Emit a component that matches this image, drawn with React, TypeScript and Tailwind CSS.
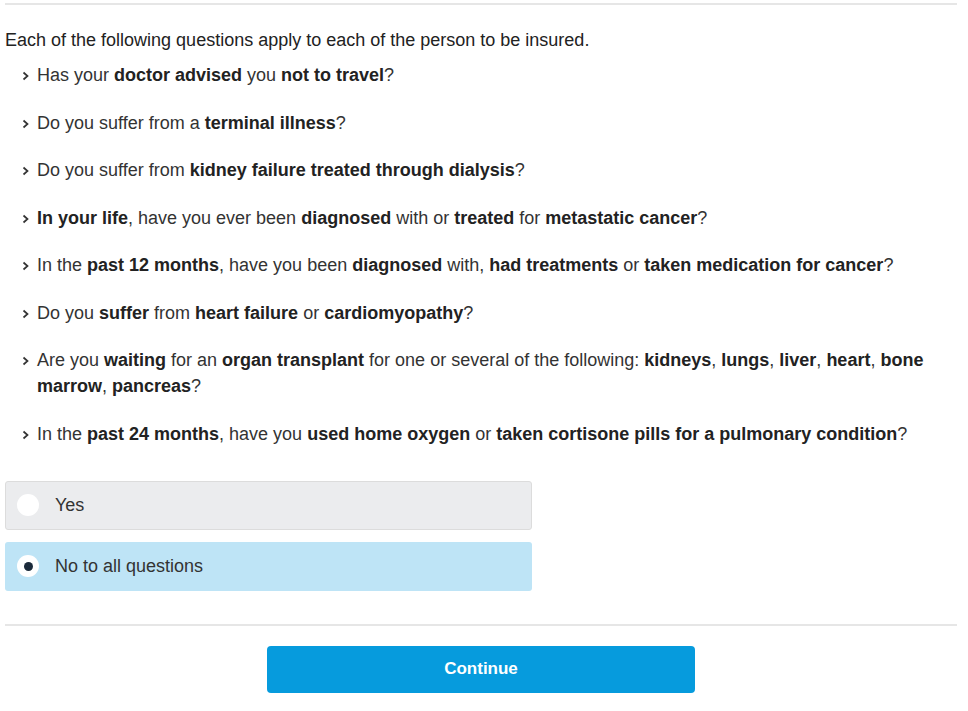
const Chevron = () => (
  <svg width="8" height="10" viewBox="0 0 8 10" className="shrink-0 mt-[9px] mr-[7px]">
    <path d="M1.5 1.5 L5.5 5 L1.5 8.5" fill="none" stroke="#333" strokeWidth="1.7" />
  </svg>
);

const B = ({ children }: { children: React.ReactNode }) => (
  <b className="font-bold text-[#222]">{children}</b>
);

const questions: React.ReactNode[] = [
  <>Has your <B>doctor advised</B> you <B>not to travel</B>?</>,
  <>Do you suffer from a <B>terminal illness</B>?</>,
  <>Do you suffer from <B>kidney failure treated through dialysis</B>?</>,
  <><B>In your life</B>, have you ever been <B>diagnosed</B> with or <B>treated</B> for <B>metastatic cancer</B>?</>,
  <>In the <B>past 12 months</B>, have you been <B>diagnosed</B> with, <B>had treatments</B> or <B>taken medication for cancer</B>?</>,
  <>Do you <B>suffer</B> from <B>heart failure</B> or <B>cardiomyopathy</B>?</>,
  <>Are you <B>waiting</B> for an <B>organ transplant</B> for one or several of the following: <B>kidneys</B>, <B>lungs</B>, <B>liver</B>, <B>heart</B>, <B>bone</B> <B>marrow</B>, <B>pancreas</B>?</>,
  <>In the <B>past 24 months</B>, have you <B>used home oxygen</B> or <B>taken cortisone pills for a pulmonary condition</B>?</>,
];

export default function App() {
  return (
    <div className="w-[968px] h-[711px] bg-white overflow-hidden text-[#333] font-['Liberation_Sans',Arial,sans-serif]">
      <div className="ml-[5px] mr-[11px] pt-[3px]">
        <div className="h-[2px] bg-[#e6e6e6]" />

        <p className="mt-[22px] text-[18px] leading-[26px] text-[#222]">
          Each of the following questions apply to each of the person to be insured.
        </p>

        <ul className="mt-[9px] flex flex-col gap-[21.5px] pl-[17px]">
          {questions.map((q, i) => (
            <li key={i} className="flex text-[18px] leading-[26px]">
              <Chevron />
              <p>{q}</p>
            </li>
          ))}
        </ul>

        <div className="mt-[34px] w-[527px] flex flex-col gap-[12px]">
          <label className="flex items-center h-[49px] rounded-[3px] bg-[#ebecee] border border-[#dcdcdc] px-[11px]">
            <span className="w-[22px] h-[22px] rounded-full bg-white" />
            <span className="ml-[16px] text-[18px] text-[#333]">Yes</span>
          </label>
          <label className="flex items-center h-[49px] rounded-[3px] bg-[#bee4f6] px-[12px]">
            <span className="w-[22px] h-[22px] rounded-full bg-white flex items-center justify-center">
              <span className="w-[9px] h-[9px] rounded-full bg-[#1b2a3a]" />
            </span>
            <span className="ml-[16px] text-[18px] text-[#333]">No to all questions</span>
          </label>
        </div>

        <div className="mt-[33px] h-[2px] bg-[#e6e6e6]" />

        <div className="flex justify-center mt-[20px]">
          <button className="w-[428px] h-[47px] rounded-[4px] bg-[#069bdd] text-white font-bold text-[17px]">
            Continue
          </button>
        </div>
      </div>
    </div>
  );
}
